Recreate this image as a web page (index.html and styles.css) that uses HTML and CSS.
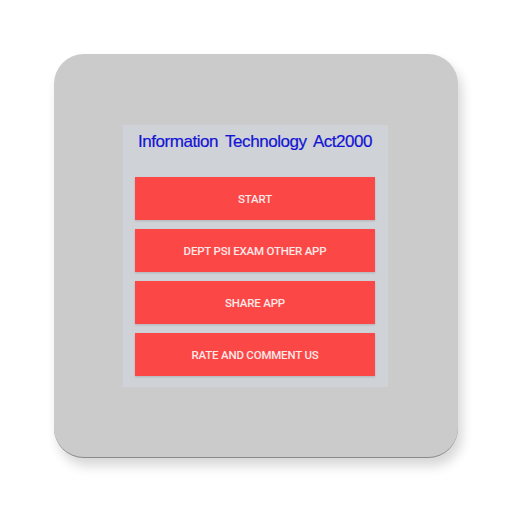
FILE: index.html
```html
<!DOCTYPE html>
<html>
<head>
<meta charset="utf-8">
<link rel="stylesheet" href="styles.css">
</head>
<body>
<div class="stage">
  <div class="card">
    <div class="panel">
      <div class="title">Information Technology Act2000</div>
      <div class="buttons">
        <div class="btn">START</div>
        <div class="btn">DEPT PSI EXAM OTHER APP</div>
        <div class="btn">SHARE APP</div>
        <div class="btn">RATE AND COMMENT US</div>
      </div>
    </div>
  </div>
</div>
</body>
</html>
```
FILE: styles.css
```css
html, body {
  margin: 0;
  padding: 0;
  background: #ffffff;
}
.stage {
  width: 512px;
  height: 512px;
  padding: 54px;
  box-sizing: border-box;
}
.card {
  width: 404px;
  height: 404px;
  background: #cbcbcb;
  border-radius: 30px;
  border-bottom: 1px solid #8a8a8a;
  box-sizing: border-box;
  box-shadow: 4px 8px 12px rgba(0,0,0,0.16);
  padding: 71px 0 0 69px;
}
.panel {
  width: 265px;
  height: 262px;
  background: #cfd2d6;
  box-sizing: border-box;
  padding: 6px 0 0 12px;
}
.title {
  font-family: "Liberation Sans", Arial, sans-serif;
  font-size: 17px;
  color: #1414d4;
  word-spacing: 3px;
  letter-spacing: -0.45px;
  line-height: 22px;
  padding-left: 3px;
  height: 46px;
  -webkit-text-stroke: 0.2px #1414d4;
}
.buttons {
  display: flex;
  flex-direction: column;
  gap: 9px;
}
.btn {
  width: 240px;
  height: 43px;
  background: #fc4747;
  color: #fde8e8;
  font-family: Roboto, "Liberation Sans", sans-serif;
  font-weight: 500;
  font-size: 11.5px;
  letter-spacing: -0.2px;
  padding-top: 1px;
  box-sizing: border-box;
  display: flex;
  align-items: center;
  justify-content: center;
  box-shadow: 0 1px 2px rgba(0,0,0,0.15);
}
```
